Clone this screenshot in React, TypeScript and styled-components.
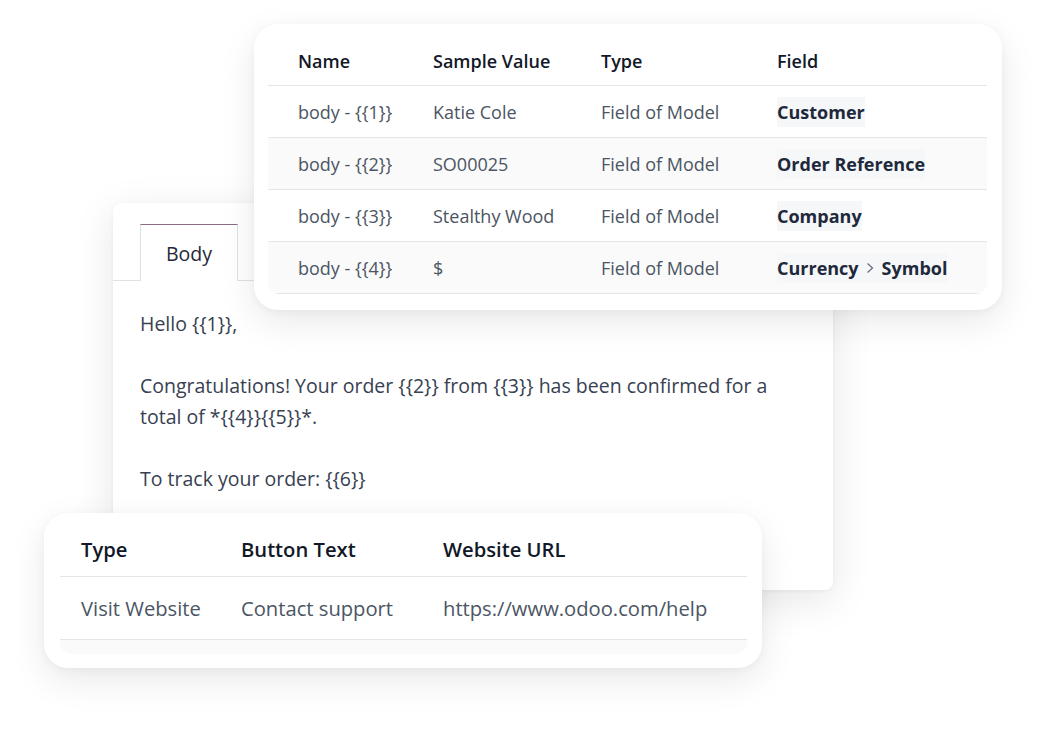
import styled, { createGlobalStyle } from 'styled-components';

const GlobalStyle = createGlobalStyle`
	html, body {
		margin: 0;
		padding: 0;
		background: #ffffff;
	}
	body {
		font-family: 'Open Sans', 'Noto Sans', sans-serif;
		color: #374151;
	}
`;

const Stage = styled.div`
	position: relative;
	width: 1046px;
	height: 736px;
	overflow: hidden;
	background: #ffffff;
`;

// the three panels are stacked on a free canvas and overlap each other
const Panel = styled.div<{ $x: number; $y: number; $w: number; $h: number; $z: number }>`
	position: absolute;
	left: ${(p) => p.$x}px;
	top: ${(p) => p.$y}px;
	width: ${(p) => p.$w}px;
	height: ${(p) => p.$h}px;
	z-index: ${(p) => p.$z};
	box-sizing: border-box;
`;

const FloatCard = styled.div<{ $pad: string }>`
	height: 100%;
	box-sizing: border-box;
	background: #ffffff;
	border-radius: 24px;
	padding: ${(p) => p.$pad};
	box-shadow: 0 12px 36px rgba(0, 0, 0, 0.09), 0 2px 8px rgba(0, 0, 0, 0.04);
`;

const EditorCard = styled.div`
	height: 100%;
	box-sizing: border-box;
	background: #ffffff;
	border-radius: 8px;
	padding-top: 21px;
	box-shadow: 0 10px 40px rgba(0, 0, 0, 0.1), 0 1px 4px rgba(0, 0, 0, 0.05);
`;

const Table = styled.div<{ $cols: string; $size: number; $round?: boolean }>`
	display: grid;
	grid-template-columns: ${(p) => p.$cols};
	font-size: ${(p) => p.$size}px;
	border-radius: ${(p) => (p.$round ? '0 0 12px 12px' : '0')};
	overflow: hidden;
`;

const HeadCell = styled.div<{ $pad: number; $h: number }>`
	height: ${(p) => p.$h}px;
	display: flex;
	align-items: center;
	padding-left: ${(p) => p.$pad}px;
	border-bottom: 1.5px solid #e5e5e5;
	font-weight: 600;
	color: #111827;
	box-sizing: border-box;
	white-space: nowrap;
`;

const Cell = styled.div<{ $pad: number; $alt?: boolean; $h: number }>`
	height: ${(p) => p.$h}px;
	display: flex;
	align-items: center;
	padding-left: ${(p) => p.$pad}px;
	border-bottom: 1.5px solid #e5e5e5;
	background: ${(p) => (p.$alt ? '#fafafa' : '#ffffff')};
	color: #4b5563;
	box-sizing: border-box;
	white-space: nowrap;
`;

const FieldTag = styled.span`
	display: inline-flex;
	align-items: center;
	background: #f6f7f9;
	padding: 3px 0;
	font-weight: 700;
	color: #1e293b;
`;

const FieldPart = styled.span`
	display: inline-flex;
	align-items: center;
`;

const Chevron = styled.svg`
	width: 14px;
	height: 14px;
	margin: 0 5px 0 4px;
`;

const TabBar = styled.div`
	display: flex;
	height: 56px;
	padding-left: 27px;
	border-bottom: 1px solid #dee2e6;
`;

const Tab = styled.div`
	width: 96px;
	display: flex;
	align-items: center;
	justify-content: center;
	border: 1px solid #dee2e6;
	border-top: 1.5px solid #8e6a85;
	border-bottom: none;
	background: #ffffff;
	margin-bottom: -1px;
	font-size: 19.5px;
	color: #1f2937;
`;

const Message = styled.div`
	padding: 27px 40px 0 27px;
	font-size: 19.5px;
	line-height: 31px;
	color: #374151;
`;

const Para = styled.p`
	margin: 0 0 31px;
`;

const Tail = styled.div`
	height: 14px;
	background: #fafafa;
	border-radius: 0 0 12px 12px;
`;

const variables = [
	{ name: 'body - {{1}}', sample: 'Katie Cole', field: ['Customer'] },
	{ name: 'body - {{2}}', sample: 'SO00025', field: ['Order Reference'] },
	{ name: 'body - {{3}}', sample: 'Stealthy Wood', field: ['Company'] },
	{ name: 'body - {{4}}', sample: '$', field: ['Currency', 'Symbol'] },
];

const messageLines = [
	'Hello {{1}},',
	'Congratulations! Your order {{2}} from {{3}} has been confirmed for a total of *{{4}}{{5}}*.',
	'To track your order: {{6}}',
];

const varCols = '135px 168px 176px 1fr';
const buttonCols = '160px 202px 1fr';

const FieldPath = ({ parts }: { parts: string[] }) => (
	<FieldTag>
		{parts.map((part, i) => (
			<FieldPart key={part}>
				{i > 0 && (
					<Chevron viewBox='0 0 14 14' fill='none'>
						<path d='M4.5 2.5 L9.5 7 L4.5 11.5' stroke='#6b7280' strokeWidth='1.3' />
					</Chevron>
				)}
				{part}
			</FieldPart>
		))}
	</FieldTag>
);

export default function App() {
	return (
		<>
			<GlobalStyle />
			<Stage>
				<Panel $x={113} $y={203} $w={720} $h={387} $z={1}>
					<EditorCard>
						<TabBar>
							<Tab>Body</Tab>
						</TabBar>
						<Message>
							{messageLines.map((line) => (
								<Para key={line}>{line}</Para>
							))}
						</Message>
					</EditorCard>
				</Panel>

				<Panel $x={254} $y={24} $w={748} $h={286} $z={2}>
					<FloatCard $pad='12px 15px 16px 14px'>
						<Table $cols={varCols} $size={18} $round>
							{['Name', 'Sample Value', 'Type', 'Field'].map((h) => (
								<HeadCell key={h} $pad={30} $h={50}>
									{h}
								</HeadCell>
							))}
							{variables.flatMap((v, i) => [
								<Cell key={v.name + 'n'} $pad={30} $h={52} $alt={i % 2 === 1}>
									{v.name}
								</Cell>,
								<Cell key={v.name + 's'} $pad={30} $h={52} $alt={i % 2 === 1}>
									{v.sample}
								</Cell>,
								<Cell key={v.name + 't'} $pad={30} $h={52} $alt={i % 2 === 1}>
									Field of Model
								</Cell>,
								<Cell key={v.name + 'f'} $pad={30} $h={52} $alt={i % 2 === 1}>
									<FieldPath parts={v.field} />
								</Cell>,
							])}
						</Table>
					</FloatCard>
				</Panel>

				<Panel $x={44} $y={513} $w={718} $h={155} $z={3}>
					<FloatCard $pad='8px 15px 13px 16px'>
						<Table $cols={buttonCols} $size={20.2}>
							{['Type', 'Button Text', 'Website URL'].map((h) => (
								<HeadCell key={h} $pad={21} $h={56}>
									{h}
								</HeadCell>
							))}
							{['Visit Website', 'Contact support', 'https://www.odoo.com/help'].map((c) => (
								<Cell key={c} $pad={21} $h={63}>
									{c}
								</Cell>
							))}
						</Table>
						<Tail />
					</FloatCard>
				</Panel>
			</Stage>
		</>
	);
}
